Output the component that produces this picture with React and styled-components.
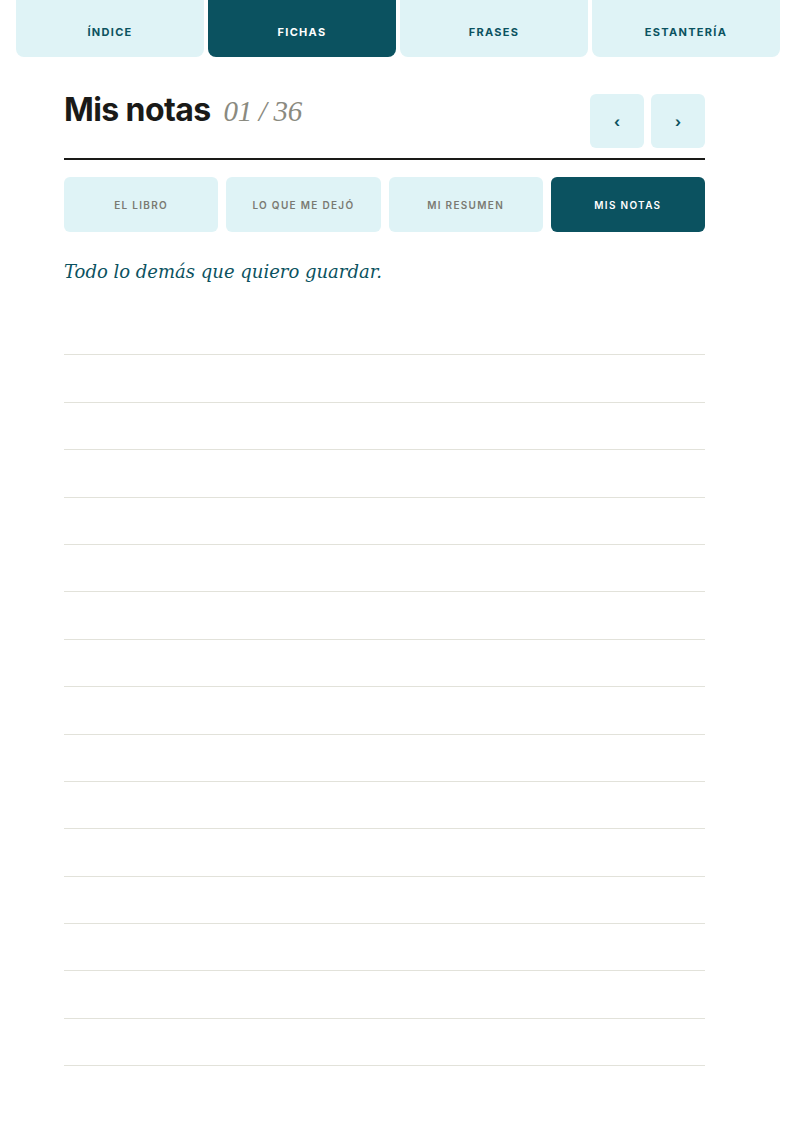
import React from 'react';
import styled, { createGlobalStyle } from 'styled-components';

const GlobalStyle = createGlobalStyle`
    body {
        margin: 0;
        background: #ffffff;
        font-family: Inter, "Liberation Sans", sans-serif;
    }
`;

const topTabs = ['ÍNDICE', 'FICHAS', 'FRASES', 'ESTANTERÍA'];
const subTabs = ['EL LIBRO', 'LO QUE ME DEJÓ', 'MI RESUMEN', 'MIS NOTAS'];

const App = () => {
    return (
        <>
            <GlobalStyle />
            <TopBar>
                {topTabs.map((t) => (
                    <TopTab key={t} $active={t === 'FICHAS'}>
                        {t}
                    </TopTab>
                ))}
            </TopBar>
            <Page>
                <Header>
                    <Title>
                        Mis notas <Count>01 / 36</Count>
                    </Title>
                    <NavButtons>
                        <NavBtn>‹</NavBtn>
                        <NavBtn>›</NavBtn>
                    </NavButtons>
                </Header>
                <Rule />
                <SubBar>
                    {subTabs.map((t) => (
                        <SubTab key={t} $active={t === 'MIS NOTAS'}>
                            {t}
                        </SubTab>
                    ))}
                </SubBar>
                <Intro>Todo lo demás que quiero guardar.</Intro>
                <Lines>
                    {Array.from({ length: 16 }).map((_, i) => (
                        <Line key={i} />
                    ))}
                </Lines>
            </Page>
        </>
    );
};

const TopBar = styled.div`
    display: grid;
    grid-template-columns: repeat(4, 1fr);
    gap: 4px;
    padding: 0 18px 0 16px;
`;

const TopTab = styled.div`
    height: 57px;
    display: flex;
    align-items: center;
    justify-content: center;
    padding-top: 6px;
    box-sizing: border-box;
    border-radius: 0 0 8px 8px;
    background: ${(p) => (p.$active ? '#0b5260' : '#dff3f6')};
    color: ${(p) => (p.$active ? '#ffffff' : '#0b5260')};
    font-size: 11px;
    font-weight: 700;
    letter-spacing: 1.3px;
`;

const Page = styled.div`
    padding: 0 93px 0 64px;
`;

const Header = styled.div`
    display: flex;
    justify-content: space-between;
    align-items: flex-start;
    margin-top: 37px;
`;

const Title = styled.h1`
    margin: 0;
    font-family: Inter, "Liberation Sans", sans-serif;
    font-size: 32px;
    line-height: 1;
    font-weight: 700;
    letter-spacing: -0.6px;
    color: #1a1a18;
`;

const Count = styled.span`
    margin-left: 6px;
    font-family: "Liberation Serif", serif;
    font-style: italic;
    font-weight: 400;
    font-size: 29px;
    letter-spacing: -0.3px;
    color: #8a8a80;
`;

const NavButtons = styled.div`
    display: flex;
    gap: 7px;
`;

const NavBtn = styled.div`
    width: 54px;
    height: 54px;
    border-radius: 6px;
    background: #dff3f6;
    color: #0b5260;
    display: flex;
    align-items: center;
    justify-content: center;
    font-size: 14px;
    font-weight: 700;
`;

const Rule = styled.div`
    margin-top: 10px;
    border-top: 2px solid #1a1a18;
`;

const SubBar = styled.div`
    display: grid;
    grid-template-columns: repeat(4, 1fr);
    gap: 8px;
    margin-top: 17px;
`;

const SubTab = styled.div`
    height: 55px;
    border-radius: 6px;
    display: flex;
    align-items: center;
    justify-content: center;
    background: ${(p) => (p.$active ? '#0b5260' : '#dff3f6')};
    color: ${(p) => (p.$active ? '#ffffff' : '#7a7a72')};
    font-size: 10px;
    font-weight: 600;
    letter-spacing: 1.3px;
`;

const Intro = styled.p`
    margin: 29px 0 0;
    font-family: "DejaVu Serif", "Liberation Serif", serif;
    font-style: italic;
    font-size: 18px;
    color: #0b5260;
`;

const Lines = styled.div`
    margin-top: 26px;
`;

const Line = styled.div`
    height: 46.4px;
    border-bottom: 1px solid #e2e2da;
`;

export default App;
